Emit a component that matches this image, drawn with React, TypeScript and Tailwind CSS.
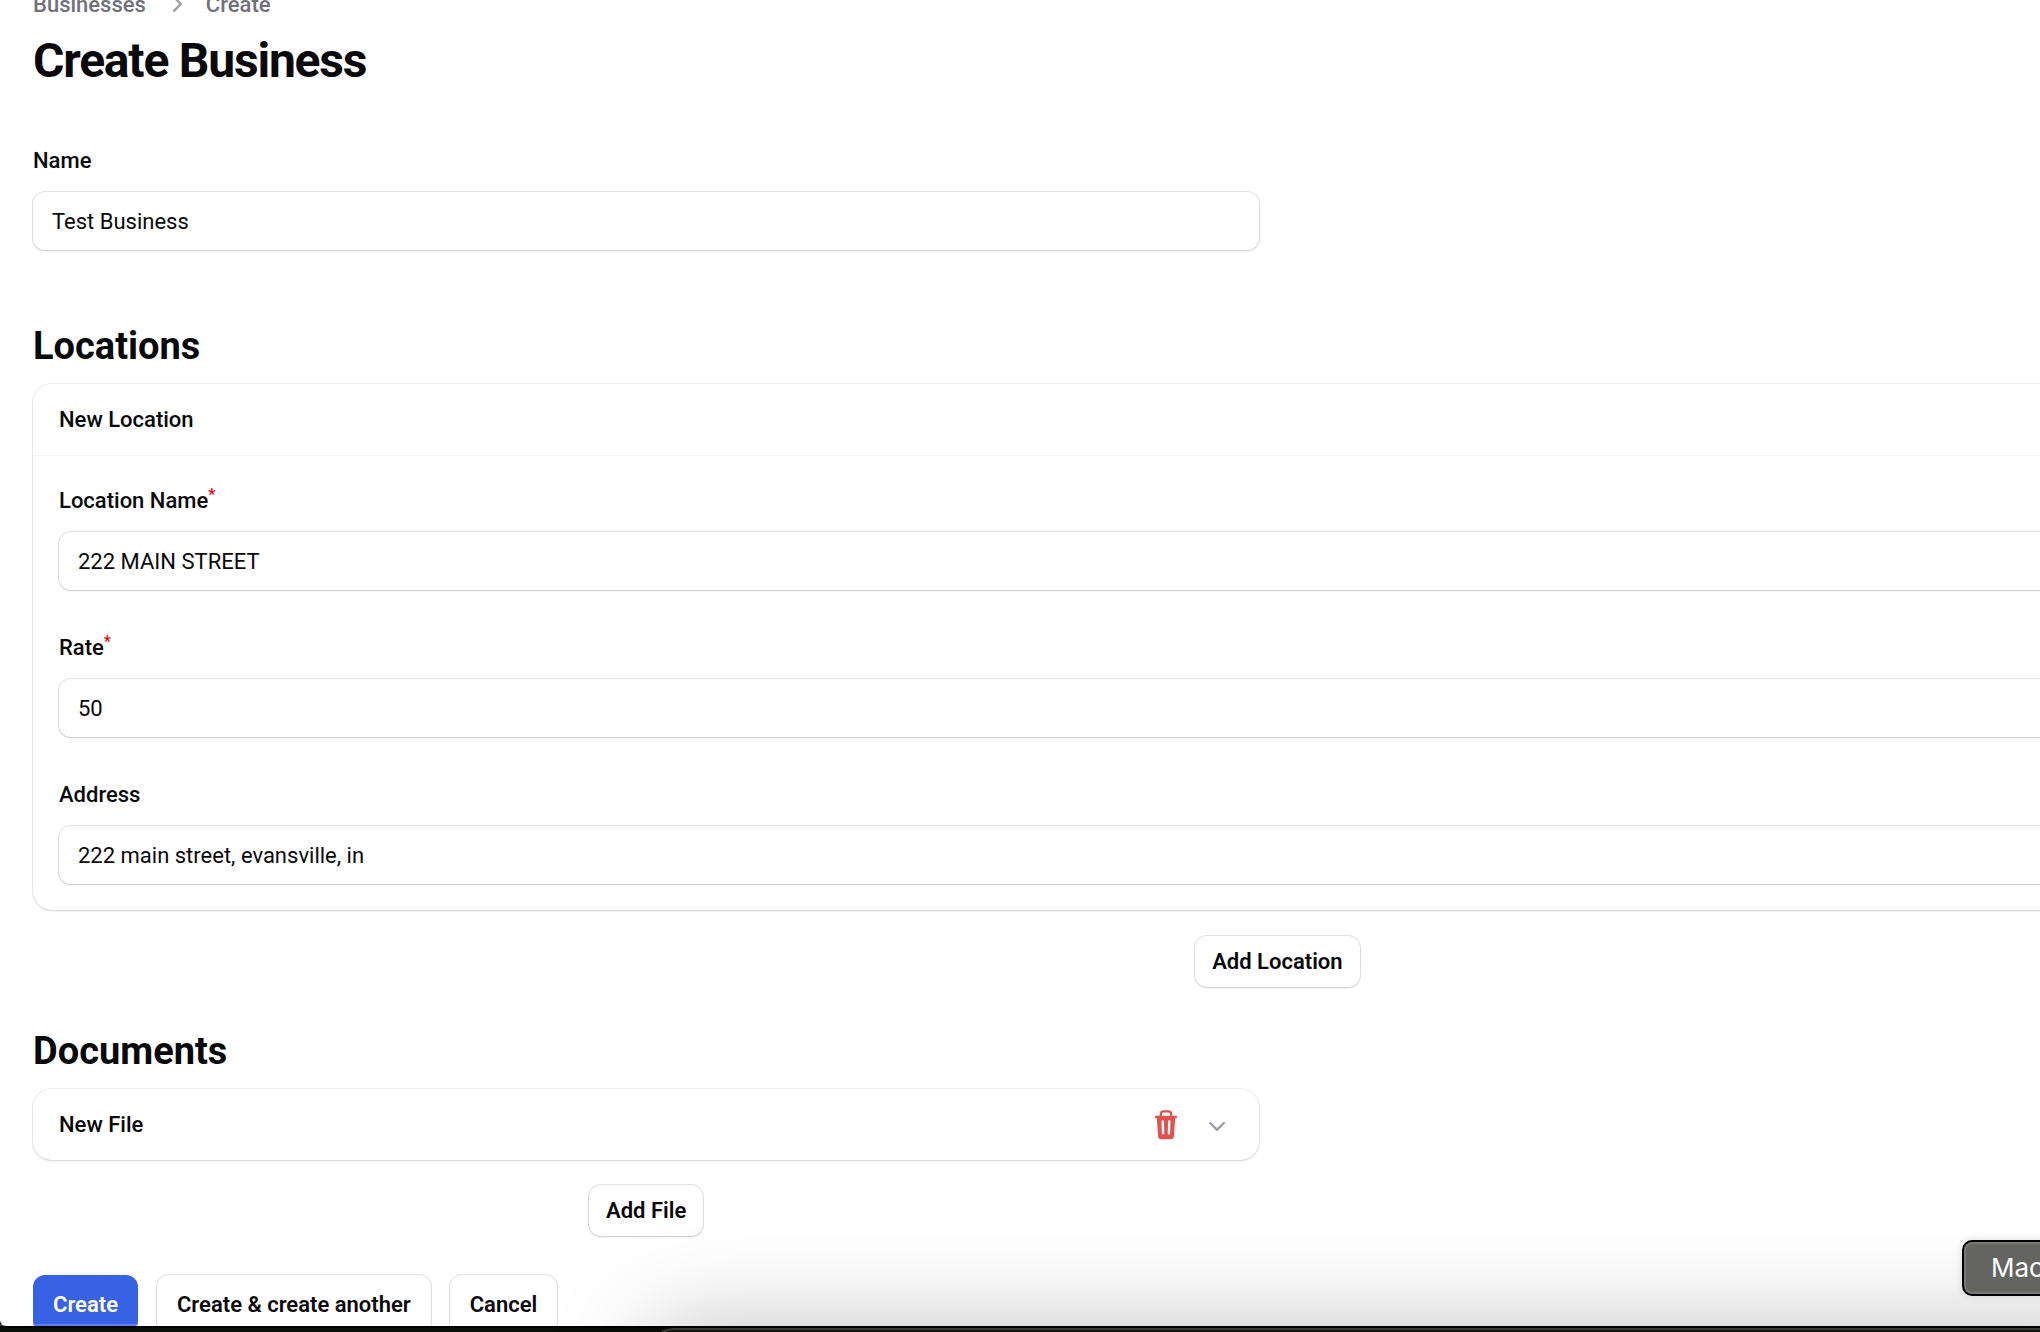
import type { ReactNode } from "react";
import { HiMiniChevronDown, HiMiniChevronRight } from "react-icons/hi2";

type FieldProps = {
	id: string;
	label: string;
	value: string;
	required?: boolean;
};

function Field({ id, label, value, required }: FieldProps) {
	return (
		<div className="flex flex-col gap-[11px]">
			<label htmlFor={id} className="text-[22px] leading-10 font-medium">
				{label}
				{required && (
					<sup className="text-base leading-0 text-red-600 -top-2">*</sup>
				)}
			</label>
			<input
				id={id}
				type="text"
				defaultValue={value}
				className="h-[58px] w-full rounded-xl bg-white px-[19px] text-[22px] shadow-sm ring-1 ring-zinc-950/10 outline-none"
			/>
		</div>
	);
}

function SmallButton({ children }: { children: ReactNode }) {
	return (
		<button
			type="button"
			className="h-[51px] self-center rounded-xl bg-white px-[17px] text-[22px] font-semibold shadow-sm ring-1 ring-zinc-950/10"
		>
			{children}
		</button>
	);
}

function TrashIcon() {
	return (
		<svg viewBox="0 0 32 32" className="size-8 text-[#e0524d]" fill="none">
			<path
				d="M10.800 7V5.200a2.800 2.800 0 0 1 2.800-2.800h4.800a2.800 2.800 0 0 1 2.800 2.800V7"
				stroke="currentColor"
				strokeWidth="2.200"
			/>
			<path d="M6 8h20" stroke="currentColor" strokeWidth="2.400" strokeLinecap="round" />
			<path
				fill="currentColor"
				d="M6.800 8h18.400l-1.200 19a3.400 3.400 0 0 1-3.400 3.200h-9.200a3.400 3.400 0 0 1-3.400-3.200L6.800 8Z"
			/>
			<path
				d="m12.700 12.400.4 12M19.300 12.400l-.4 12"
				stroke="white"
				strokeWidth="2.400"
				strokeLinecap="round"
			/>
		</svg>
	);
}

export default function App() {
	return (
		<div className="relative h-screen overflow-hidden bg-[#0b0d09] pb-1.5 font-['Roboto',sans-serif] text-zinc-950">
			<div className="h-full overflow-hidden rounded-bl-md bg-white">
				{/* the form is wider than the window, and scrolled down a little */}
				<main className="-mt-3 w-[122vw] ml-[33px]">
					<nav className="flex h-8 items-center gap-[14px] text-[22px] font-medium text-zinc-500">
						<a href="#businesses">Businesses</a>
						<HiMiniChevronRight className="size-8 text-zinc-400" />
						<a href="#create">Create</a>
					</nav>
					<h1 className="mt-3 text-5xl leading-[58px] font-bold tracking-tight">
						Create Business
					</h1>

					<form className="mt-[51px] flex flex-col">
						<div className="grid grid-cols-2 gap-9">
							<Field id="name" label="Name" value="Test Business" />
						</div>

						<section className="mt-[70px] flex flex-col">
							<h2 className="text-[38px] leading-[53px] font-bold">Locations</h2>
							<div className="mt-[11px] rounded-[19px] bg-white shadow-sm ring-1 ring-zinc-950/6">
								<h3 className="px-[26px] text-[22px] leading-[71px] font-medium">
									New Location
								</h3>
								<div className="flex flex-col gap-[38px] border-t border-zinc-100 px-[26px] pt-[25px] pb-[26px]">
									<Field
										id="location-name"
										label="Location Name"
										value="222 MAIN STREET"
										required
									/>
									<Field id="rate" label="Rate" value="50" required />
									<Field
										id="address"
										label="Address"
										value="222 main street, evansville, in"
									/>
								</div>
							</div>
							<div className="mt-[26px] flex justify-center">
								<SmallButton>Add Location</SmallButton>
							</div>
						</section>

						<section className="mt-[38px] grid grid-cols-2 gap-x-9">
							<div className="flex flex-col">
								<h2 className="text-[38px] leading-[53px] font-bold">Documents</h2>
								<div className="mt-[11px] flex h-[71px] items-center gap-[19px] rounded-[19px] bg-white px-[26px] shadow-sm ring-1 ring-zinc-950/6">
									<h3 className="flex-1 text-[22px] font-medium">New File</h3>
									<button type="button" aria-label="Delete">
										<TrashIcon />
									</button>
									<button type="button" aria-label="Expand">
										<HiMiniChevronDown className="size-8 text-zinc-400" />
									</button>
								</div>
								<div className="mt-[25px] flex justify-center">
									<SmallButton>Add File</SmallButton>
								</div>
							</div>
						</section>

						<div className="mt-[39px] flex gap-[19px] text-[22px] font-semibold">
							<button
								type="button"
								className="h-[58px] rounded-xl bg-[#3762e3] px-5 text-white"
							>
								Create
							</button>
							<button
								type="button"
								className="h-[58px] rounded-xl bg-white px-5 shadow-sm ring-1 ring-zinc-950/10"
							>
								Create &amp; create another
							</button>
							<button
								type="button"
								className="h-[58px] rounded-xl bg-white px-5 shadow-sm ring-1 ring-zinc-950/10"
							>
								Cancel
							</button>
						</div>
					</form>
				</main>
			</div>

			{/* desktop edge, dock and its tooltip */}
			<div className="absolute inset-x-0 bottom-1.5 h-0.5 bg-white/20" />
			<div className="absolute -right-24 -bottom-24 left-[650px] h-[100px] rounded-3xl border-t-2 border-[#3a3a38] bg-[#141412] shadow-[0_0_100px_rgba(0,0,0,0.26)]" />
			<div className="absolute inset-x-0 bottom-1 h-0.5 bg-black" />
			<div className="absolute bottom-9 left-[1962px] h-14 rounded-[10px] border-2 border-black bg-[#646461] pr-5 pl-[27px] text-[26px] leading-[52px] text-white shadow-[inset_0_0_0_2px_#787876,0_0_8px_rgba(0,0,0,0.12)] font-['Inter',sans-serif]">
				Mac
			</div>
		</div>
	);
}
